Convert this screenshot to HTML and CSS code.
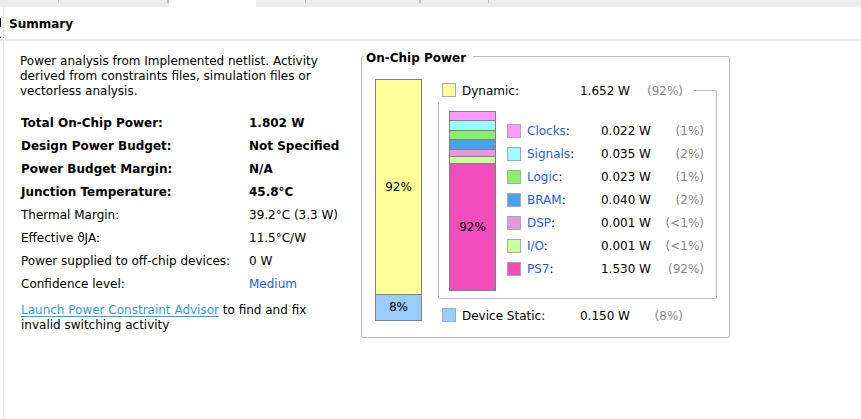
FILE: index.html
```html
<!DOCTYPE html>
<html lang="en">
<head>
<meta charset="utf-8">
<title>Power Summary</title>
<link rel="stylesheet" href="styles.css">
</head>
<body>
<div class="tabs">
  <span class="tab tab-first"></span>
  <span class="tab tab-second"></span>
  <span class="tab tab-active"></span>
  <span class="tab tab-fourth"></span>
  <span class="tab tab-fifth"></span>
  <span class="tab tab-sixth"></span>
</div>
<div class="workspace">
  <aside class="side"><span class="side-mark"></span><span class="side-dot"></span></aside>
  <main class="pane">
    <h1 class="title">Summary</h1>
    <div class="content">
      <section class="summary">
        <p class="intro">Power analysis from Implemented netlist. Activity derived from constraints files, simulation files or vectorless analysis.</p>
        <table class="facts">
          <tbody>
          <tr class="strong"><th scope="row">Total On-Chip Power:</th><td>1.802 W</td></tr>
          <tr class="strong"><th scope="row">Design Power Budget:</th><td>Not Specified</td></tr>
          <tr class="strong"><th scope="row">Power Budget Margin:</th><td>N/A</td></tr>
          <tr class="strong"><th scope="row">Junction Temperature:</th><td>45.8°C</td></tr>
          <tr><th scope="row">Thermal Margin:</th><td>39.2°C (3.3 W)</td></tr>
          <tr><th scope="row">Effective ϑJA:</th><td>11.5°C/W</td></tr>
          <tr><th scope="row">Power supplied to off-chip devices:</th><td>0 W</td></tr>
          <tr><th scope="row">Confidence level:</th><td><a class="link" href="#">Medium</a></td></tr>
          </tbody>
        </table>
        <p class="advice"><a class="advisor" href="#">Launch Power Constraint Advisor</a> to find and fix<br>invalid switching activity</p>
      </section>
      <fieldset class="power">
        <legend class="power-title">On-Chip Power</legend>
        <div class="stack total-stack">
          <div class="seg dynamic">92%</div>
          <div class="seg static">8%</div>
        </div>
        <div class="breakdown">
          <fieldset class="group">
            <legend class="line">
              <span class="swatch dynamic"></span><span class="name">Dynamic:</span><span class="watts">1.652 W</span><span class="share">(92%)</span>
            </legend>
            <div class="stack part-stack">
              <div class="seg clocks"></div>
              <div class="seg signals"></div>
              <div class="seg logic"></div>
              <div class="seg bram"></div>
              <div class="seg dsp"></div>
              <div class="seg io"></div>
              <div class="seg ps7">92%</div>
            </div>
            <table class="parts">
              <tbody>
              <tr><td><span class="swatch clocks"></span></td><th scope="row"><a class="link" href="#">Clocks</a>:</th><td class="watts">0.022 W</td><td class="share">(1%)</td></tr>
              <tr><td><span class="swatch signals"></span></td><th scope="row"><a class="link" href="#">Signals</a>:</th><td class="watts">0.035 W</td><td class="share">(2%)</td></tr>
              <tr><td><span class="swatch logic"></span></td><th scope="row"><a class="link" href="#">Logic</a>:</th><td class="watts">0.023 W</td><td class="share">(1%)</td></tr>
              <tr><td><span class="swatch bram"></span></td><th scope="row"><a class="link" href="#">BRAM</a>:</th><td class="watts">0.040 W</td><td class="share">(2%)</td></tr>
              <tr><td><span class="swatch dsp"></span></td><th scope="row"><a class="link" href="#">DSP</a>:</th><td class="watts">0.001 W</td><td class="share">(&lt;1%)</td></tr>
              <tr><td><span class="swatch io"></span></td><th scope="row"><a class="link" href="#">I/O</a>:</th><td class="watts">0.001 W</td><td class="share">(&lt;1%)</td></tr>
              <tr><td><span class="swatch ps7"></span></td><th scope="row"><a class="link" href="#">PS7</a>:</th><td class="watts">1.530 W</td><td class="share">(92%)</td></tr>
              </tbody>
            </table>
          </fieldset>
          <div class="line static-line">
            <span class="swatch static"></span><span class="name">Device Static:</span><span class="watts">0.150 W</span><span class="share">(8%)</span>
          </div>
        </div>
      </fieldset>
    </div>
  </main>
</div>
</body>
</html>
```
FILE: styles.css
```css
* { box-sizing: border-box; }

body {
  display: flex;
  flex-direction: column;
  min-height: 100vh;
  margin: 0;
  background: #fff;
  color: #000;
  font: 12px/15px "DejaVu Sans", sans-serif;
}

p, h1, fieldset, legend { margin: 0; padding: 0; }
table { border-collapse: collapse; }
td, th { padding: 0; text-align: left; font-weight: normal; white-space: nowrap; }

/* Tab strip */
.tabs { display: flex; height: 7px; background: #ececec; }
.tab { height: 3px; border-right: 1px solid #bbb; }
.tab-first { width: 59px; }
.tab-second { width: 110px; border-right-width: 2px; }
.tab-active { width: 87px; height: 7px; border: 0; background: #fff; }
.tab-fourth { width: 50px; }
.tab-fifth { width: 115px; border-right-width: 2px; }
.tab-sixth { width: 68px; }

.workspace { display: flex; flex: 1; }
.side { width: 3px; height: 34px; padding-top: 11px; border-bottom: 2px solid #e8e8e8; }
.side-mark { display: block; width: 1px; height: 9px; background: #000; }
.side-dot { display: block; width: 1px; height: 1px; margin-top: 10px; background: #000; }
.pane { flex: 1; border-left: 1px solid #e4e4e4; }
.title {
  height: 34px;
  padding-left: 5px;
  border-bottom: 2px solid #e8e8e8;
  font-size: 12px;
  line-height: 34px;
}
.content { display: flex; align-items: flex-start; padding: 6px 16px; }

/* Summary column */
.summary { flex: 0 0 341px; padding-top: 7px; }
.intro { width: 320px; }
.facts { margin: 13px 0 0 1px; }
.facts tr { height: 23px; }
.facts th { min-width: 228px; padding-right: 11px; }
.facts .strong > * { font-weight: bold; }
.advice { margin: 7px 0 0 1px; }
.link { color: #1f5cff; text-decoration: none; }
.advisor { color: #2f9bf5; text-decoration: underline; text-underline-offset: 2px; }

/* Power chart */
.power {
  display: flex;
  align-items: flex-start;
  flex: 0 1 369px;
  height: 291px;
  padding: 12px 12px 0 13px;
  border: 1px solid #bbb;
  border-radius: 2px;
}
.power-title { margin-left: -11px; padding: 4px 7px 0 2px; font-weight: bold; }
.stack { flex: none; width: 47px; border: 1px solid #808080; border-top: 0; }
.seg {
  display: flex;
  align-items: center;
  justify-content: center;
  height: 9px;
  border-top: 1px solid #808080;
}
.total-stack { margin-top: 1px; }
.total-stack .dynamic { height: 215px; }
.total-stack .static { height: 26px; }
.part-stack { margin-top: 9px; }
.part-stack .signals, .part-stack .bram { height: 10px; }
.part-stack .dsp, .part-stack .io { height: 7px; }
.part-stack .ps7 { height: 127px; }

.dynamic { background: #ffff99; }
.static { background: #99ccff; }
.clocks { background: #ff99ff; }
.signals { background: #99ffff; }
.logic { background: #8aef6b; }
.bram { background: #48a2f0; }
.dsp { background: #e599dc; }
.io { background: #ccff99; }
.ps7 { background: #f14cbc; }

.breakdown { flex: 1; margin-left: 16px; }
.group {
  display: flex;
  align-items: flex-start;
  height: 221px;
  padding-left: 10px;
  border: 1px solid #bbb;
  border-radius: 2px;
}
.line { display: flex; align-items: center; width: 256px; height: 24px; padding: 0 11px 0 4px; background: #fff; }
.group > .line { margin-left: -11px; }
.swatch { display: block; flex: none; width: 14px; height: 14px; border: 1px solid #aaa; }
.name, .watts, .share, .parts th { padding-top: 2px; }
.name { width: 109px; margin-left: 6px; }
.watts { width: 59px; text-align: right; }
.share { width: 53px; color: #888; text-align: right; }
.static-line { margin-top: 4px; }
.parts { margin: 17px 0 0 11px; }
.parts tr { height: 23px; }
.parts td:first-child { width: 20px; }
.parts th { width: 65px; }
```
